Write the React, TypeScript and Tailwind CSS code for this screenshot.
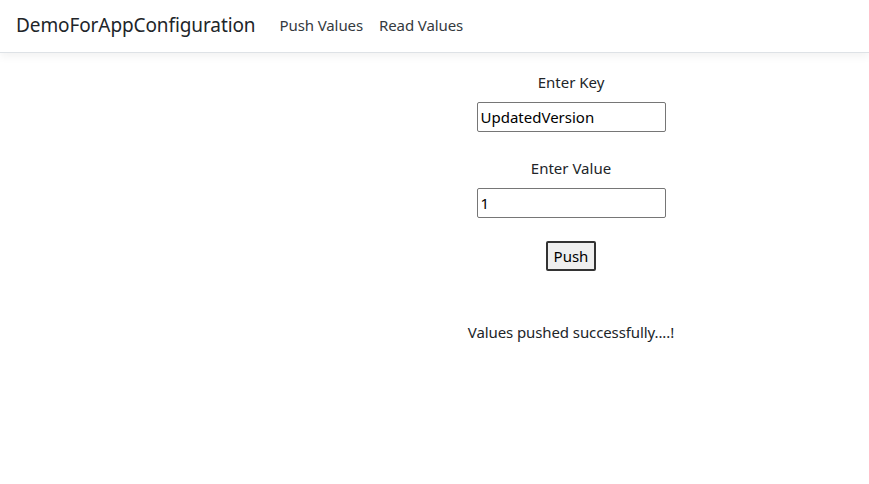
import React from "react"

export default function App() {
  return (
    <div
      className="min-h-[484px] bg-white text-[#212529]"
      style={{ fontFamily: '"Noto Sans", "Open Sans", sans-serif' }}
    >
      {/* Navbar */}
      <nav className="flex h-[53px] items-center border-b border-[#dee2e6] bg-white pb-[2px] pl-4 shadow-[0_4px_8px_rgba(0,0,0,0.05)]">
        <span className="text-[19px] leading-none tracking-[-0.1px] text-[#212529]">
          DemoForAppConfiguration
        </span>
        <div className="ml-[24px] flex gap-[16px] text-[15px] tracking-[-0.1px] text-[#343a40]">
          <span>Push Values</span>
          <span>Read Values</span>
        </div>
      </nav>

      {/* Form */}
      <main className="flex justify-center pl-[273px] pt-[17px]">
        <div className="flex w-[300px] flex-col items-center text-[15px]">
          <label className="leading-6">Enter Key</label>
          <input
            className="mt-2 h-[30px] w-[189px] rounded-[2px] border border-[#767676] px-[3px] text-[15px] text-black outline-none"
            defaultValue="UpdatedVersion"
          />
          <label className="mt-6 leading-6">Enter Value</label>
          <input
            className="mt-2 h-[30px] w-[189px] rounded-[2px] border border-[#767676] px-[3px] text-[15px] text-black outline-none"
            defaultValue="1"
          />
          <button className="mt-[23px] h-[30px] w-[50px] rounded-[2px] border-2 border-[#333] bg-[#efefef] text-[15px] text-black">
            Push
          </button>
          <p className="mt-[49px] whitespace-nowrap leading-6 tracking-[-0.1px]">
            Values pushed successfully....!
          </p>
        </div>
      </main>
    </div>
  )
}
